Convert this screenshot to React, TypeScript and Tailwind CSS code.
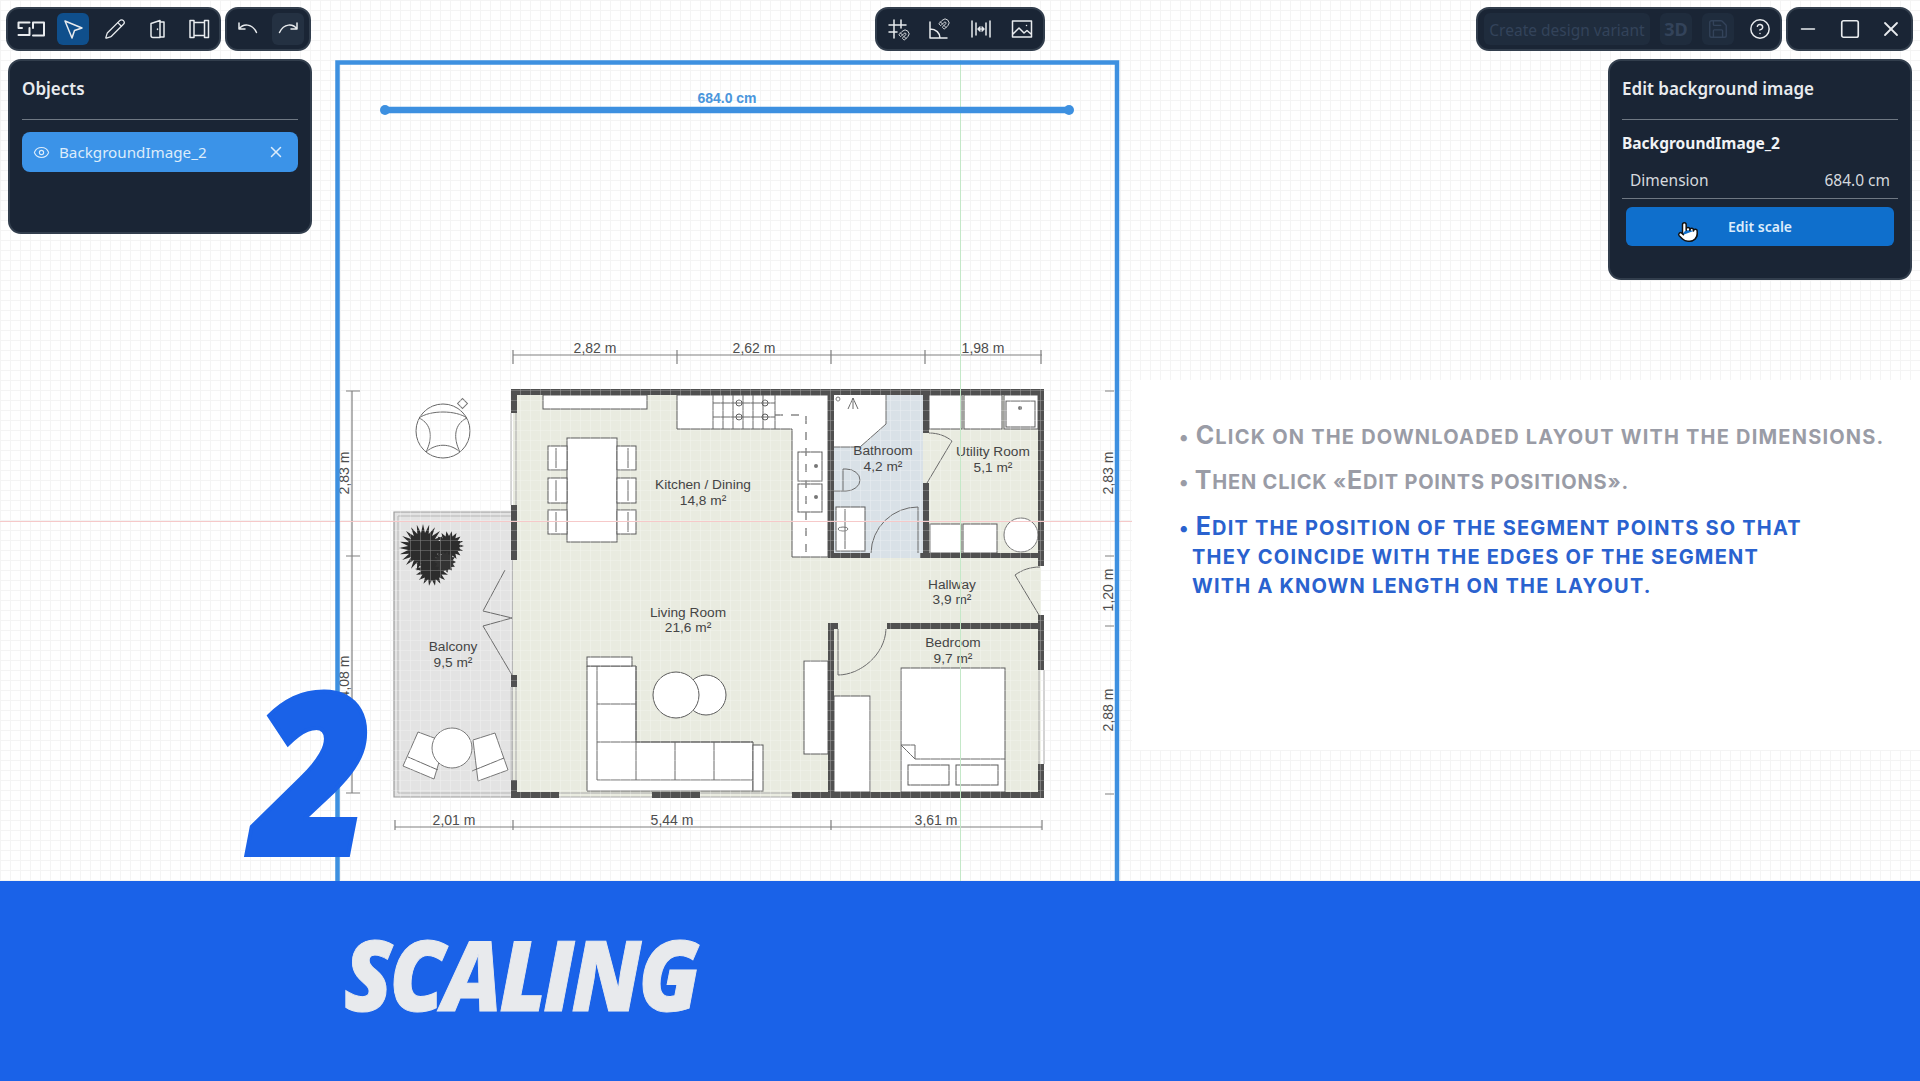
import { Magnet, Pencil, Pointer, Save, CircleHelp, Eye, X, Minus, Square } from "lucide-react";
import type { ReactNode } from "react";

const ink = "#5a5a5a";
const wall = "#505050";

const spikes = (cx: number, cy: number, r: number, inner: number, n: number) => {
  const pts: string[] = [];
  for (let i = 0; i < n * 2; i++) {
    const a = (Math.PI * i) / n;
    const d = i % 2 ? inner : r;
    pts.push(`${(cx + Math.cos(a) * d).toFixed(1)},${(cy + Math.sin(a) * d).toFixed(1)}`);
  }
  return pts.join(" ");
};

const walls = [
  [511, 389, 533, 6],
  [511, 389, 6, 24],
  [511, 505, 6, 55],
  [511, 675, 6, 12],
  [511, 780, 6, 17],
  [511, 792, 48, 6],
  [652, 792, 48, 6],
  [792, 792, 252, 6],
  [1038, 389, 6, 177],
  [1038, 615, 6, 55],
  [1038, 764, 6, 34],
  [828, 389, 6, 169],
  [828, 553, 42, 5],
  [920, 553, 118, 5],
  [923, 389, 6, 44],
  [923, 483, 6, 75],
  [887, 623, 151, 6],
  [828, 623, 6, 174],
  [828, 623, 10, 6],
];

const whites = [
  [543, 395, 104, 14],
  [567, 438, 50, 104],
  [548, 446, 19, 24],
  [548, 478, 19, 25],
  [548, 510, 19, 24],
  [617, 446, 19, 24],
  [617, 478, 19, 25],
  [617, 510, 19, 24],
  [798, 452, 24, 29],
  [798, 484, 24, 28],
  [929, 395, 33, 34],
  [964, 395, 38, 34],
  [1004, 395, 34, 34],
  [1006, 401, 29, 26],
  [930, 524, 31, 29],
  [963, 524, 34, 29],
  [836, 507, 29, 44],
  [804, 661, 24, 93],
  [834, 696, 36, 96],
  [901, 668, 104, 124],
  [908, 765, 41, 20],
  [956, 765, 42, 20],
  [587, 657, 45, 9],
  [753, 745, 10, 46],
];

const lines = [
  "M513 355H1042",
  "M513 350V364M677 350V364M831 350V364M925 350V364M1041 350V364",
  "M352 391V793M346 391H360M346 556H360M346 793H360",
  "M1105 391H1114M1105 556H1114M1105 626H1114M1105 794H1114",
  "M395 827H1042M395 820V830M513 820V830M831 820V830M1042 820V830",
];

const thin = [
  "M505 570L483 611L512 618L483 626L512 675",
  "M556 448V468M556 480V501M556 512V532M628 448V468M628 480V501M628 512V532",
  "M597 666V780H753M597 704H636M597 742H753M636 666V780M675 742V780M714 742V780",
  "M713 395V429M723 395V429M733 395V429M743 395V429M753 395V429M763 395V429M775 395V429M713 403H775M713 417H775",
  "M886 395V424L860 447H834",
  "M843 469V491M843 469H846A14 11 0 0 1 846 491H834",
  "M845 509V549",
  "M918 507V553M918 507A47 47 0 0 0 871 553",
  "M929 433C938 433 946 436 952 441L927 483",
  "M1015 575C1022 570 1030 567 1040 567M1015 575L1039 615",
  "M838 629V675C860 675 885 655 886 629",
  "M915 759H1005M901 745H915V759Z",
  "M853 398L848 409M853 398L858 409M853 398V409",
  "M408 757L438 770",
  "M472 771L504 758",
  "M419 418C432 424 433 438 426 452M467 418C454 424 453 438 460 452M419 418C430 410 456 410 467 418M426 452C436 443 450 443 460 452",
];

const Plan = () => (
  <svg width="1920" height="881" viewBox="0 0 1920 881" className="absolute inset-0 font-['Liberation_Sans',sans-serif]">
    <defs>
      <pattern id="grid" width="10" height="10" patternUnits="userSpaceOnUse">
        <path d="M0 0H10M0 0V10" stroke="#fff" strokeWidth="1.2" fill="none" />
      </pattern>
    </defs>

    {/* floors */}
    <path d="M394 512H513V797H394Z" fill="#e3e3e3" stroke="#9a9a9a" strokeWidth="1.2" />
    <path d="M398 516H513V793H398Z" fill="none" stroke="#b5b5b5" />
    <path d="M513 391H1041V797H513Z" fill="#e9ebe0" />
    <path d="M834 395H923V558H834V447H860L886 424V395Z" fill="#d9e1e7" />
    <path d="M834 395H886V424L860 447H834Z" fill="#fff" />

    {/* furniture */}
    <path d="M677 395H828V557H792V429H677Z" fill="#fff" stroke={ink} />
    <path d="M587 666H636V742H753V791H587Z" fill="#fff" stroke={ink} />
    {whites.map(([x, y, w, h]) => (
      <rect key={`${x}-${y}`} x={x} y={y} width={w} height={h} fill="#fff" stroke={ink} strokeWidth="1" />
    ))}
    <polygon points="418,732 403,766 434,779 445,742" fill="#fff" stroke="#777" />
    <polygon points="473,740 495,733 508,770 478,781" fill="#fff" stroke="#777" />
    <circle cx="706" cy="695" r="20" fill="#fff" stroke={ink} />
    <circle cx="676" cy="695" r="23" fill="#fff" stroke={ink} />
    <circle cx="1021" cy="535" r="17" fill="#fff" stroke="#777" />
    <circle cx="452" cy="748" r="20" fill="#fff" stroke="#777" />
    <circle cx="443" cy="431" r="27" fill="none" stroke="#666" />
    <rect x="459" y="400" width="7" height="7" fill="none" stroke="#777" transform="rotate(45 462.5 403.5)" />
    <circle cx="739" cy="403" r="3" fill="#fff" stroke={ink} />
    <circle cx="765" cy="403" r="3" fill="#fff" stroke={ink} />
    <circle cx="739" cy="417" r="3" fill="#fff" stroke={ink} />
    <circle cx="765" cy="417" r="3" fill="#fff" stroke={ink} />
    <circle cx="816" cy="466" r="2" fill="#777" />
    <circle cx="816" cy="497" r="2" fill="#777" />
    <circle cx="1020" cy="408" r="2" fill="#777" />
    <circle cx="838" cy="399" r="2" fill="none" stroke="#777" />
    <ellipse cx="843" cy="529" rx="5" ry="2" fill="none" stroke="#777" />
    <path d="M775 415H806V555" fill="none" stroke="#888" strokeWidth="1.5" strokeDasharray="8 8" />
    {thin.map((d) => (
      <path key={d} d={d} fill="none" stroke="#6a6a6a" strokeWidth="1" />
    ))}

    {/* plant */}
    <polygon points={spikes(423, 548, 24, 15, 24)} fill="#2c2c2c" />
    <polygon points={spikes(449, 546, 15, 10, 18)} fill="#2c2c2c" />
    <polygon points={spikes(432, 569, 17, 11, 18)} fill="#2c2c2c" />
    <polygon points={spikes(445, 562, 11, 8, 14)} fill="#333" />

    {/* walls and windows */}
    {walls.map(([x, y, w, h]) => (
      <rect key={`${x}-${y}-${w}`} x={x} y={y} width={w} height={h} fill={wall} />
    ))}
    <path d="M511 413V505M516 413V505M511 687V780M516 687V780M559 793H652M559 797H652M700 793H792M700 797H792M1039 670V764M1044 670V764" stroke="#a8a8a8" strokeWidth="1" />

    <rect x="390" y="385" width="660" height="416" fill="url(#grid)" opacity="0.4" />

    {/* dimensions */}
    {lines.map((d) => (
      <path key={d} d={d} fill="none" stroke="#808080" strokeWidth="1.2" />
    ))}
    <g fill="#4d4d4d" fontSize="14" textAnchor="middle">
      <text x="595" y="353">2,82 m</text>
      <text x="754" y="353">2,62 m</text>
      <text x="983" y="353">1,98 m</text>
      <text x="454" y="825">2,01 m</text>
      <text x="672" y="825">5,44 m</text>
      <text x="936" y="825">3,61 m</text>
      <text transform="translate(349 473) rotate(-90)">2,83 m</text>
      <text transform="translate(349 677) rotate(-90)">4,08 m</text>
      <text transform="translate(1113 473) rotate(-90)">2,83 m</text>
      <text transform="translate(1113 590) rotate(-90)">1,20 m</text>
      <text transform="translate(1113 710) rotate(-90)">2,88 m</text>
    </g>
    <g fill="#454545" fontSize="13.7" textAnchor="middle">
      <text x="703" y="489">Kitchen / Dining</text>
      <text x="703" y="505">14,8 m²</text>
      <text x="883" y="455">Bathroom</text>
      <text x="883" y="471">4,2 m²</text>
      <text x="993" y="456">Utility Room</text>
      <text x="993" y="472">5,1 m²</text>
      <text x="952" y="589">Hallway</text>
      <text x="952" y="604">3,9 m²</text>
      <text x="953" y="647">Bedroom</text>
      <text x="953" y="663">9,7 m²</text>
      <text x="688" y="617">Living Room</text>
      <text x="688" y="632">21,6 m²</text>
      <text x="453" y="651">Balcony</text>
      <text x="453" y="667">9,5 m²</text>
    </g>

    {/* helper guides */}
    <path d="M0 521.5H1132" stroke="#f6c9c9" strokeWidth="1" />
    <path d="M960.5 60V881" stroke="#c4e8c8" strokeWidth="1" />

    {/* image frame and scale segment */}
    <path d="M337.5 881V62.5H1117V881" fill="none" stroke="#3d90e0" strokeWidth="4.5" />
    <path d="M385 110H1069" stroke="#3d90e0" strokeWidth="6.5" />
    <circle cx="385" cy="110" r="5" fill="#3d90e0" />
    <circle cx="1069" cy="110" r="5" fill="#3d90e0" />
    <text x="727" y="103" fill="#4a96dc" fontSize="14" fontWeight="700" textAnchor="middle">684.0 cm</text>
  </svg>
);

const Bar = ({ children, className }: { children: ReactNode; className: string }) => (
  <div className={`flex h-[44px] items-center rounded-[13px] border-2 border-[#323e4d] bg-[#1a2535] ${className}`}>
    {children}
  </div>
);

const IconBtn = ({ children, active, soft }: { children: ReactNode; active?: boolean; soft?: boolean }) => (
  <div
    className={`flex h-[32px] w-[32px] items-center justify-center rounded-md text-[#e8ebee] ${
      active ? "bg-[#0f4f8c]" : soft ? "bg-[#243142]" : ""
    }`}
  >
    {children}
  </div>
);

const Ico = ({ children, w = 24 }: { children: ReactNode; w?: number }) => (
  <svg width={w} height="24" viewBox={`0 0 ${w} 24`} fill="none" stroke="currentColor" strokeWidth="1.5" strokeLinecap="round" strokeLinejoin="round">
    {children}
  </svg>
);

const Panel = ({ title, children, className }: { title: string; children: ReactNode; className: string }) => (
  <div className={`rounded-[13px] border-2 border-[#323e4d] bg-[#1a2535] px-[12px] ${className}`}>
    <div className="flex h-[59px] items-center border-b border-[#6f7883] pb-[2px] text-[17px] font-semibold text-[#e8ebee]">{title}</div>
    {children}
  </div>
);

// capitals stay tall, everything else is set as smaller capitals
const Caps = ({ text }: { text: string }) => (
  <>
    {(text.match(/[A-Z]+|[^A-Z]+/g) ?? []).map((part, i) =>
      /[A-Z]/.test(part[0]) ? (
        <span key={i} className="text-[25px]">
          {part}
        </span>
      ) : (
        <span key={i} className="text-[20px] uppercase">
          {part}
        </span>
      ),
    )}
  </>
);

export default function App() {
  return (
    <div className="flex h-[1081px] w-[1920px] flex-col overflow-hidden bg-white font-['Noto_Sans',sans-serif]">
      <div className="relative h-[881px] bg-white bg-[linear-gradient(to_right,#f4f4f4_1px,transparent_1px),linear-gradient(to_bottom,#f4f4f4_1px,transparent_1px)] bg-[size:10px_10px]">
        <div className="absolute left-[1132px] right-0 top-[380px] h-[370px] bg-white" />
        <Plan />

        {/* top left */}
        <div className="absolute left-[6px] top-[7px] flex w-[306px] flex-col gap-[8px]">
          <div className="flex gap-[4px]">
            <Bar className="w-[215px] justify-between pl-[7px] pr-[4px]">
              <IconBtn>
                <Ico w={28}>
                  <path d="M1.5 5.5H12.5M1.5 5.5V11H5M12.5 11V18H1.5M16 11V5.5H27V18.5H16" strokeWidth="2" />
                </Ico>
              </IconBtn>
              <IconBtn active>
                <Ico>
                  <path d="M4 4L21 11L13.5 13.5L11 21Z" />
                </Ico>
              </IconBtn>
              <IconBtn>
                <Pencil size={22} strokeWidth={1.4} />
              </IconBtn>
              <IconBtn>
                <Ico>
                  <path d="M6 6.5L15 3.5V20.5H8A2 2 0 0 1 6 18.5ZM15 5H19V20H15M12.5 12V12.5" />
                </Ico>
              </IconBtn>
              <IconBtn>
                <Ico>
                  <path d="M3 3.5H7V20.5H3ZM17.5 3.5H21.5V20.5H17.5ZM7 5.5H17.5M7 18.5H17.5" />
                </Ico>
              </IconBtn>
            </Bar>
            <Bar className="w-[86px] justify-between px-[5px]">
              <IconBtn>
                <Ico>
                  <path d="M3 6V12H9M3 12C7 6.5 16 6 20.5 15.5" />
                </Ico>
              </IconBtn>
              <IconBtn soft>
                <Ico>
                  <path d="M21 6V12H15M21 12C17 6.5 8 6 3.5 15.5" />
                </Ico>
              </IconBtn>
            </Bar>
          </div>
          <Panel title="Objects" className="ml-[2px] h-[175px]">
            <div className="mt-[12px] flex h-[40px] items-center gap-[9px] rounded-lg bg-[#3b93e8] pl-[11px] pr-[13px] text-[15.2px] text-[#dcecfb]">
              <Eye size={17} strokeWidth={1.6} />
              <span className="flex-1 pt-[1px]">BackgroundImage_2</span>
              <X size={18} strokeWidth={2} />
            </div>
          </Panel>
        </div>

        {/* top center */}
        <Bar className="absolute left-[875px] top-[7px] w-[170px] justify-between px-[5px]">
          <IconBtn>
            <Ico>
              <path d="M8 3V21M15 3V11M3 8H20M3 15H11" />
              <Magnet x={12} y={12} width={12} height={12} strokeWidth={1.8} />
            </Ico>
          </IconBtn>
          <IconBtn>
            <Ico>
              <path d="M3 5V21H20M3 12C9 12 13 16 13 21" />
              <Magnet x={11} y={1} width={12} height={12} strokeWidth={1.8} />
            </Ico>
          </IconBtn>
          <IconBtn>
            <Ico>
              <path d="M3 4V20M7 6V18M17 6V18M21 4V20M9.5 12H14.5M11 10L9 12L11 14M13 10L15 12L13 14" />
            </Ico>
          </IconBtn>
          <IconBtn>
            <Ico>
              <path d="M2.5 4H21.5V20H2.5ZM3 17L9 11L14 16L17 13.5L21 17M16.5 8.5V8.6" />
            </Ico>
          </IconBtn>
        </Bar>

        {/* top right */}
        <div className="absolute left-[1476px] top-[7px] flex gap-[4px]">
          <Bar className="w-[306px] gap-[10px] pl-[6px] pr-[4px] text-[#33435a]">
            <div className="flex h-[32px] w-[166px] items-center justify-center rounded-md bg-[#1f2c3d] pt-[3px] text-[15.5px] whitespace-nowrap">
              Create design variant
            </div>
            <div className="flex h-[32px] w-[32px] items-center justify-center rounded-md bg-[#1f2c3d] text-[18px] font-bold">3D</div>
            <div className="flex h-[32px] w-[32px] items-center justify-center rounded-md bg-[#1f2c3d]">
              <Save size={22} strokeWidth={1.5} />
            </div>
            <div className="flex h-[32px] w-[32px] items-center justify-center text-[#e8ebee]">
              <CircleHelp size={22} strokeWidth={1.6} />
            </div>
          </Bar>
          <Bar className="w-[127px] justify-between px-[4px]">
            <IconBtn>
              <Minus size={22} strokeWidth={1.8} />
            </IconBtn>
            <IconBtn>
              <Square size={22} strokeWidth={1.8} />
            </IconBtn>
            <IconBtn>
              <X size={24} strokeWidth={1.8} />
            </IconBtn>
          </Bar>
        </div>

        {/* edit panel */}
        <Panel title="Edit background image" className="absolute left-[1608px] top-[59px] h-[221px] w-[304px]">
          <div className="mt-[11px] text-[15.5px] font-bold leading-[24px] text-[#f1f3f5]">BackgroundImage_2</div>
          <div className="mt-[12px] flex h-[32px] items-center justify-between border-b border-[#6f7883] px-[8px] pb-[4px] text-[15.5px] text-[#d5d9de]">
            <span>Dimension</span>
            <span>684.0 cm</span>
          </div>
          <div className="mx-[4px] mt-[8px] flex h-[39px] items-center justify-center rounded-md bg-[#0f6fcc] text-[14px] font-semibold text-[#dcecfb]">
            Edit scale
          </div>
        </Panel>
        <Pointer size={22} className="absolute left-[1677px] top-[221px]" fill="#fff" stroke="#111" strokeWidth={1.6} />

        {/* instructions */}
        <div className="absolute left-[1179px] top-[421px] font-['Inter',sans-serif] font-bold tracking-[1.2px]">
          <p className="h-[45px] leading-[29px] text-[#9a9ca6]">
            <Caps text="• Click on the downloaded layout with the dimensions." />
          </p>
          <p className="h-[46px] leading-[29px] text-[#9a9ca6] tracking-[0.8px]">
            <Caps text="• Then click «Edit points positions»." />
          </p>
          <div className="leading-[28px] text-[#2a62cf]">
            <p>
              <Caps text="• Edit the position of the segment points so that" />
            </p>
            <p className="pl-[13px]">
              <Caps text="they coincide with the edges of the segment" />
            </p>
            <p className="pl-[13px]">
              <Caps text="with a known length on the layout." />
            </p>
          </div>
        </div>

        <div className="absolute left-[252px] top-[637px] origin-left scale-x-[0.92] font-['Open_Sans',sans-serif] text-[226px] font-extrabold italic leading-[260px] text-[#1a62e8] [-webkit-text-stroke:4px_#1a62e8]">
          2
        </div>
      </div>

      <div className="flex h-[200px] items-center bg-[#1a62e8] pb-[17px] pl-[344px]">
        <span className="origin-left scale-x-[0.9] font-['Open_Sans',sans-serif] text-[98px] font-extrabold italic leading-none tracking-[-3px] text-[#e8eaed] [-webkit-text-stroke:1px_#e8eaed]">
          SCALING
        </span>
      </div>
    </div>
  );
}
